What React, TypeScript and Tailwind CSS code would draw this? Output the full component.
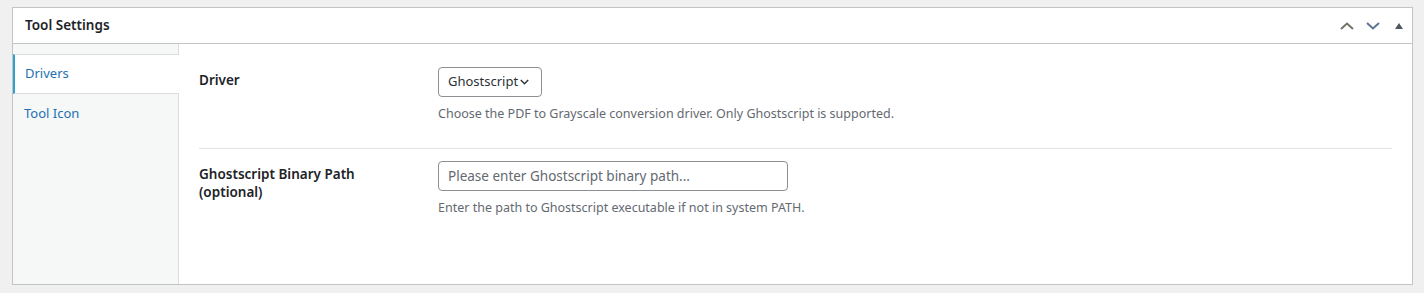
import React, { useState } from "react";

const font = { fontFamily: '"Noto Sans", "Open Sans", sans-serif' };

export default function App() {
  const [tab, setTab] = useState("drivers");
  const [driver, setDriver] = useState("ghostscript");
  const [path, setPath] = useState("");

  const tabClass = (active: boolean) =>
    active
      ? "w-[166px] h-[40px] text-left bg-white border-y border-[#dcdcde] border-l-2 border-l-[#2ea2cc] pl-[10px] text-[13px] text-[#2271b1]"
      : "w-[165px] h-[40px] text-left pl-[11px] text-[13px] text-[#2271b1]";

  return (
    <div className="h-[293px] bg-[#f0f0f1] pt-[7px] pl-[12px]" style={font}>
      <div className="w-[1401px] h-[278px] border border-[#c3c4c7] bg-white flex flex-col">
        {/* Header */}
        <div className="h-[36px] shrink-0 border-b border-[#c3c4c7] flex items-center pl-[12px]">
          <h2 className="text-[13.5px] font-semibold text-[#1d2327] flex-1 leading-none">Tool Settings</h2>
          <div className="flex items-center">
            <button className="w-[26px] h-[26px] flex items-center justify-center">
              <svg width="14" height="8" viewBox="0 0 14 8" fill="none">
                <path d="M1 7L7 1.5L13 7" stroke="#74736a" strokeWidth="2" />
              </svg>
            </button>
            <button className="w-[26px] h-[26px] flex items-center justify-center">
              <svg width="14" height="8" viewBox="0 0 14 8" fill="none">
                <path d="M1 1L7 6.5L13 1" stroke="#5d7591" strokeWidth="2" />
              </svg>
            </button>
            <button className="w-[26px] h-[26px] flex items-center justify-center">
              <svg width="8" height="6" viewBox="0 0 8 6">
                <path d="M4 0L8 6H0Z" fill="#50575e" />
              </svg>
            </button>
          </div>
        </div>

        {/* Body */}
        <div className="flex flex-1">
          {/* Tabs */}
          <div className="w-[166px] shrink-0 bg-[#f6f7f7] border-r border-[#dcdcde] pt-[10px]">
            <ul>
              <li>
                <button onClick={() => setTab("drivers")} className={tabClass(tab === "drivers")}>
                  Drivers
                </button>
              </li>
              <li>
                <button onClick={() => setTab("icon")} className={tabClass(tab === "icon")}>
                  Tool Icon
                </button>
              </li>
            </ul>
          </div>

          {/* Content */}
          <div className="flex-1 pt-[23px] pl-[20px] pr-[20px]">
            <div className="flex border-b border-[#e3e3e5] pb-[25px]">
              <div className="w-[239px] shrink-0 pt-[4px] text-[13.5px] font-semibold text-[#1d2327] leading-[18px]">
                Driver
              </div>
              <div>
                <div className="relative w-[104px]">
                  <select
                    value={driver}
                    onChange={(e) => setDriver(e.target.value)}
                    className="appearance-none w-[104px] h-[30px] border border-[#8c8f94] rounded-[4px] bg-white pl-[9px] pr-[20px] text-[13px] text-[#2c3338]"
                  >
                    <option value="ghostscript">Ghostscript</option>
                  </select>
                  <svg
                    className="absolute right-[13px] top-[12px] pointer-events-none"
                    width="9"
                    height="6"
                    viewBox="0 0 9 6"
                    fill="none"
                  >
                    <path d="M0.8 1L4.5 4.8L8.2 1" stroke="#2c3338" strokeWidth="1.4" />
                  </svg>
                </div>
                <p className="mt-[8px] text-[12.5px] leading-[18px] text-[#646970]">
                  Choose the PDF to Grayscale conversion driver. Only Ghostscript is supported.
                </p>
              </div>
            </div>

            <div className="flex pt-[12px]">
              <div className="w-[239px] shrink-0 pt-[4px] text-[13.5px] font-semibold text-[#1d2327] leading-[18px]">
                Ghostscript Binary Path
                <br />
                (optional)
              </div>
              <div>
                <input
                  value={path}
                  onChange={(e) => setPath(e.target.value)}
                  placeholder="Please enter Ghostscript binary path..."
                  className="w-[350px] h-[30px] border border-[#8c8f94] rounded-[4px] px-[9px] text-[13.5px] text-[#2c3338] placeholder:text-[#646970] outline-none"
                />
                <p className="mt-[8px] text-[12.5px] leading-[18px] text-[#646970]">
                  Enter the path to Ghostscript executable if not in system PATH.
                </p>
              </div>
            </div>
          </div>
        </div>
      </div>
    </div>
  );
}
